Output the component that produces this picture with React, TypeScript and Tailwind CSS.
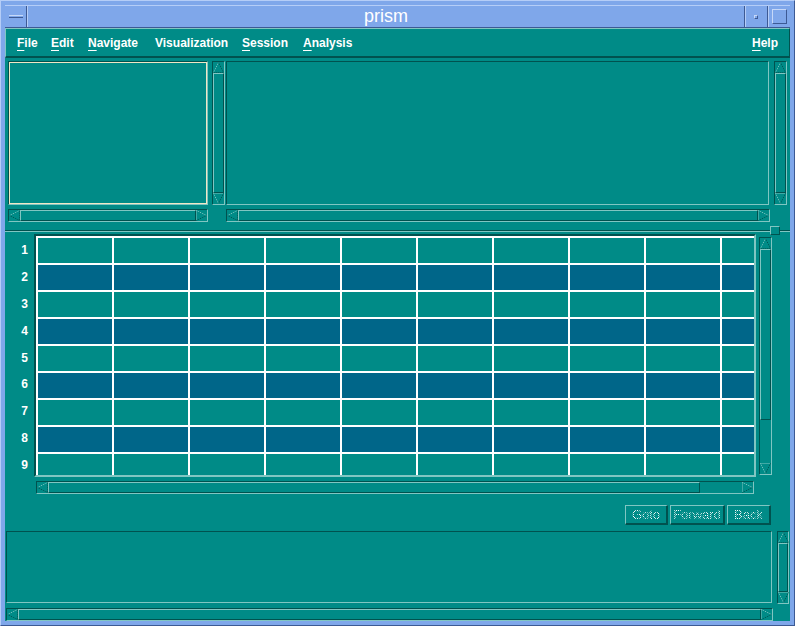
import React from 'react';

// Motif look: teal client area, light-blue window frame
const sunken = 'border border-t-[#00524f] border-l-[#00524f] border-b-[#80c6c2] border-r-[#80c6c2]';
const raised = 'border border-t-[#80c6c2] border-l-[#80c6c2] border-b-[#00524f] border-r-[#00524f]';

type Dir = 'up' | 'down' | 'left' | 'right';

const arrowPaths: Record<Dir, { light: string; dark: string }> = {
  up: { light: 'M5.5 0.5 L0.5 10.5', dark: 'M5.5 0.5 L10.5 10.5 L0.5 10.5' },
  down: { light: 'M0.5 0.5 L10.5 0.5 M0.5 0.5 L5.5 10.5', dark: 'M10.5 0.5 L5.5 10.5' },
  left: { light: 'M0.5 5.5 L10.5 0.5', dark: 'M0.5 5.5 L10.5 10.5 L10.5 0.5' },
  right: { light: 'M0.5 0.5 L10.5 5.5 M0.5 0.5 L0.5 10.5', dark: 'M0.5 10.5 L10.5 5.5' },
};

function Arrow({ dir }: { dir: Dir }) {
  const p = arrowPaths[dir];
  return (
    <svg width="11" height="11" viewBox="0 0 11 11" className="shrink-0 block">
      <path d={p.light} fill="none" stroke="#80c6c2" strokeWidth="1" strokeDasharray="1 1" />
      <path d={p.dark} fill="none" stroke="#00524f" strokeWidth="1" strokeDasharray="1 1" />
    </svg>
  );
}

function VScroll({ className = '', thumb = 'flex-1' }: { className?: string; thumb?: string }) {
  return (
    <div className={`flex flex-col shrink-0 bg-[#008b87] ${sunken} ${className}`}>
      <Arrow dir="up" />
      <div className="flex-1 flex flex-col">
        <div className={`${thumb} ${raised}`} />
      </div>
      <Arrow dir="down" />
    </div>
  );
}

function HScroll({ className = '', thumb = 'flex-1' }: { className?: string; thumb?: string }) {
  return (
    <div className={`flex shrink-0 bg-[#008b87] ${sunken} ${className}`}>
      <Arrow dir="left" />
      <div className="flex-1 flex">
        <div className={`${thumb} ${raised}`} />
      </div>
      <Arrow dir="right" />
    </div>
  );
}

function Mnemonic({ first, rest }: { first: string; rest: string }) {
  return (
    <>
      <span className="underline decoration-1 underline-offset-[3px]">{first}</span>
      {rest}
    </>
  );
}

function ActionButton({ label, width }: { label: string; width: string }) {
  return (
    <div className={`${width} h-full flex items-center justify-center ${raised} border-b-2 border-r-2`}>
      <span className="text-[13px] leading-none bg-clip-text text-transparent bg-[conic-gradient(#ffffff_25%,transparent_0_50%,#ffffff_0_75%,transparent_0)] bg-[length:2px_2px]">
        {label}
      </span>
    </div>
  );
}

const rows = [1, 2, 3, 4, 5, 6, 7, 8, 9];
const cols = [0, 1, 2, 3, 4, 5, 6, 7, 8, 9];

export default function App() {
  return (
    <div className="w-[795px] h-[626px] flex flex-col bg-[#7fa7ea] border border-t-[#b5cdf7] border-l-[#b5cdf7] border-b-[#3d5a94] border-r-[#3d5a94] px-[4px] pt-[4px] pb-[4px] font-['Liberation_Sans',Arial,sans-serif] overflow-hidden">
      {/* title bar */}
      <div className="h-[23px] shrink-0 flex border-t border-t-[#b5cdf7] border-b border-b-[#3d5a94]">
        <div className="w-[22px] flex items-center justify-center border-r border-r-[#3d5a94]">
          <div className="w-[14px] h-[3px] bg-[#7fa7ea] border-t border-t-[#c6d8f8] border-b border-b-[#3d5a94]" />
        </div>
        <div className="flex-1 flex items-center justify-center border-l border-l-[#b5cdf7]">
          <span className="text-white text-[18px] leading-none pb-[1px]">prism</span>
        </div>
        <div className="w-[23px] flex items-center justify-center border-l border-l-[#3d5a94] shadow-[inset_1px_0_0_#b5cdf7]">
          <div className="w-[4px] h-[4px] bg-[#7fa7ea] border border-t-[#c6d8f8] border-l-[#c6d8f8] border-b-[#3d5a94] border-r-[#3d5a94]" />
        </div>
        <div className="w-[23px] flex items-center justify-center border-l border-l-[#3d5a94] shadow-[inset_1px_0_0_#b5cdf7]">
          <div className="w-[15px] h-[15px] border border-t-[#c6d8f8] border-l-[#c6d8f8] border-b-[#3d5a94] border-r-[#3d5a94]" />
        </div>
      </div>

      {/* client area */}
      <div className="flex-1 flex flex-col bg-[#008b87]">
        {/* menu bar */}
        <div className="h-[30px] shrink-0 flex items-center justify-between pl-[11px] pr-[11px] border-t border-l border-t-[#80c6c2] border-l-[#80c6c2] border-b-2 border-b-[#00524f] border-r border-r-[#00524f] text-white text-[12px] font-bold">
          <div className="flex">
            <span className="w-[34px]"><Mnemonic first="F" rest="ile" /></span>
            <span className="w-[37px]"><Mnemonic first="E" rest="dit" /></span>
            <span className="w-[67px]"><Mnemonic first="N" rest="avigate" /></span>
            <span className="w-[87px]">Visualization</span>
            <span className="w-[61px]"><Mnemonic first="S" rest="ession" /></span>
            <span><Mnemonic first="A" rest="nalysis" /></span>
          </div>
          <span><Mnemonic first="H" rest="elp" /></span>
        </div>

        {/* upper panes */}
        <div className="mt-[3px] h-[144px] shrink-0 flex pl-[3px]">
          <div className={`w-[200px] h-full ${sunken}`}>
            <div className="w-full h-full border border-[#efe7c5]" />
          </div>
          <VScroll className="ml-[4px] w-[13px] h-full" />
          <div className={`ml-[1px] w-[543px] h-full ${sunken}`} />
          <VScroll className="ml-[5px] w-[13px] h-full" />
        </div>
        <div className="mt-[4px] h-[13px] shrink-0 flex pl-[3px]">
          <HScroll className="w-[200px] h-full" />
          <HScroll className="ml-[18px] w-[544px] h-full" />
        </div>

        {/* pane sash */}
        <div className="relative h-[12px] shrink-0 pt-[8px]">
          <div className="h-px bg-[#00524f]" />
          <div className="h-px bg-[#80c6c2]" />
          <div className={`absolute left-[765px] top-[4px] w-[10px] h-[9px] bg-[#008b87] ${raised}`} />
        </div>

        {/* table */}
        <div className="h-[243px] shrink-0 flex">
          <div className="w-[29px] flex flex-col items-end pt-[4px] pr-[6px] gap-[2px]">
            {rows.map((r) => (
              <div key={r} className="h-[25px] flex items-center text-white text-[12px] font-bold leading-none">
                {r}
              </div>
            ))}
          </div>
          <div className="w-[722px] h-full border-2 border-t-[#00524f] border-l-[#00524f] border-b-[#80c6c2] border-r-[#80c6c2]">
            <div className="w-full h-full overflow-hidden bg-white pl-[2px] pt-[2px] flex flex-col gap-[2px]">
              {rows.map((r) => (
                <div key={r} className="h-[25px] shrink-0 flex gap-[2px]">
                  {cols.map((c) => (
                    <div key={c} className={`w-[74px] shrink-0 ${r % 2 === 0 ? 'bg-[#006689]' : 'bg-[#008b87]'}`} />
                  ))}
                </div>
              ))}
            </div>
          </div>
          <VScroll className="ml-[3px] mt-[3px] w-[13px] h-[238px]" thumb="h-[171px]" />
        </div>
        <HScroll className="mt-[4px] ml-[31px] w-[718px] h-[13px]" thumb="w-[652px]" />

        {/* navigation buttons */}
        <div className="mt-[11px] h-[20px] shrink-0 flex justify-end pr-[19px] gap-[2px]">
          <ActionButton label="Goto" width="w-[43px]" />
          <ActionButton label="Forward" width="w-[55px]" />
          <ActionButton label="Back" width="w-[44px]" />
        </div>

        {/* output area */}
        <div className="mt-[6px] h-[73px] shrink-0 flex items-start pl-[1px]">
          <div className={`w-[766px] h-[72px] ${sunken}`} />
          <VScroll className="ml-[5px] w-[12px] h-full" />
        </div>
        <HScroll className="mt-[4px] ml-[1px] w-[767px] h-[13px]" />
      </div>
    </div>
  );
}
